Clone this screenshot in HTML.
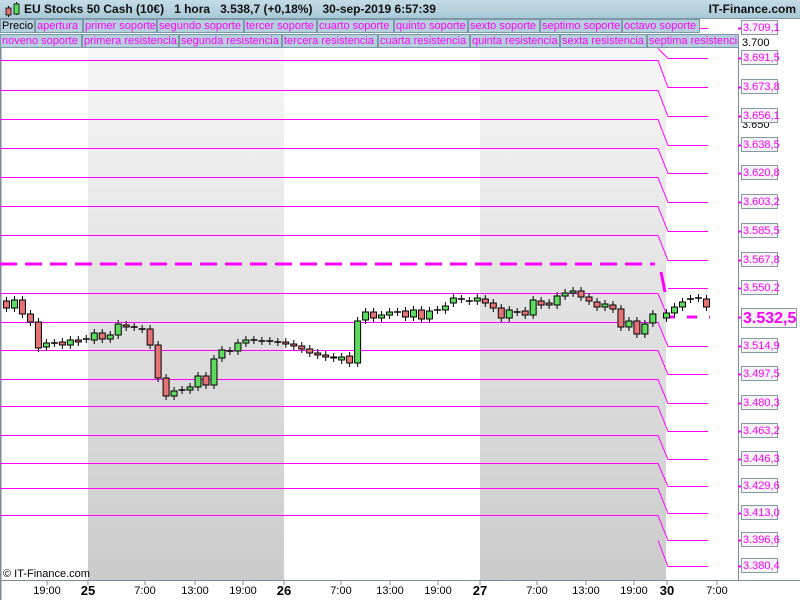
<!DOCTYPE html>
<html><head><meta charset="utf-8"><style>
body{margin:0;width:800px;height:600px;overflow:hidden;background:#fff;font-family:"Liberation Sans",sans-serif;position:relative}
.hdr{position:absolute;left:0;top:0;width:800px;height:18px;background:linear-gradient(#c4dce6,#a8c8d6);border-bottom:1px solid #7a98a8}
.hdr .t{position:absolute;left:24px;top:2px;font-size:12px;font-weight:bold;color:#111;white-space:pre}
.hdr .r{position:absolute;right:4px;top:2px;font-size:12px;font-weight:bold;color:#111}
.row{position:absolute;left:0;height:15px}
.c{position:absolute;top:0;height:14px;background:#b5d0dc;border:1px solid #7a98a8;box-sizing:border-box;color:#f0f;font-size:11px;line-height:13px;padding-left:1px;white-space:nowrap;overflow:hidden}
.lab{position:absolute;left:741px;width:37px;height:15px;border:1px solid #8899a6;background:#f4f4f4;color:#f0f;font-size:11px;line-height:15px;text-align:left;padding-left:1px;box-sizing:border-box}
.blk{position:absolute;left:742px;font-size:11px;color:#000}
.ax{position:absolute;top:585px;font-size:11px;color:#000;transform:translateX(-50%)}
.ax b{font-size:13px}
</style></head><body>
<svg style="position:absolute;left:0;top:0" width="800" height="600">
<defs><linearGradient id="g" x1="0" y1="0" x2="0" y2="1"><stop offset="0" stop-color="#f6f6f6"/><stop offset="1" stop-color="#cbcbcb"/></linearGradient></defs>
<rect x="88" y="48" width="196" height="532" fill="url(#g)"/>
<rect x="480" y="48" width="186" height="532" fill="url(#g)"/>
<line x1="0.5" y1="48" x2="0.5" y2="600" stroke="#7a8c98" stroke-width="2"/>
<line x1="738.5" y1="48" x2="738.5" y2="580" stroke="#7a8c98"/>
<line x1="0" y1="580.5" x2="800" y2="580.5" stroke="#7a8c98"/>
<g id="lines" stroke="#f0f" fill="none" stroke-width="1"></g>
<g id="ticks" stroke="#7a8c98"></g>
<line x1="0" y1="264" x2="655" y2="264" stroke="#f0f" stroke-width="3" stroke-dasharray="17,8"/>
<line x1="661" y1="272" x2="665" y2="292" stroke="#f0f" stroke-width="3"/>
<line x1="665" y1="317" x2="710" y2="317" stroke="#f0f" stroke-width="3" stroke-dasharray="10,12"/>
<g id="cd"></g>
</svg>
<div class="hdr"><svg style="position:absolute;left:3px;top:1px" width="18" height="17"><line x1="5.5" y1="5" x2="5.5" y2="16" stroke="#000"/><rect x="3" y="7" width="5" height="7" fill="#e07070" stroke="#000" stroke-width=".8"/><line x1="13.5" y1="1" x2="13.5" y2="14" stroke="#000"/><rect x="11" y="3" width="5" height="10" fill="#5d5" stroke="#000" stroke-width=".8"/></svg><div class="t">EU Stocks 50 Cash (10€)   1 hora   3.538,7 (+0,18%)   30-sep-2019 6:57:39</div><div class="r">IT-Finance.com</div></div>
<div class="row" style="top:19px">
<div class="c" style="left:0;width:35px;color:#000">Precio</div>
<div class="c" style="left:35px;width:48px">apertura</div>
<div class="c" style="left:83px;width:74px">primer soporte</div>
<div class="c" style="left:157px;width:87px">segundo soporte</div>
<div class="c" style="left:244px;width:73px">tercer soporte</div>
<div class="c" style="left:317px;width:77px">cuarto soporte</div>
<div class="c" style="left:394px;width:74px">quinto soporte</div>
<div class="c" style="left:468px;width:72px">sexto soporte</div>
<div class="c" style="left:540px;width:82px">septimo soporte</div>
<div class="c" style="left:622px;width:78px">octavo soporte</div>
</div>
<div class="row" style="top:34px">
<div class="c" style="left:0;width:82px">noveno soporte</div>
<div class="c" style="left:82px;width:97px">primera resistencia</div>
<div class="c" style="left:179px;width:103px">segunda resistencia</div>
<div class="c" style="left:282px;width:96px">tercera resistencia</div>
<div class="c" style="left:378px;width:92px">cuarta resistencia</div>
<div class="c" style="left:470px;width:90px">quinta resistencia</div>
<div class="c" style="left:560px;width:87px">sexta resistencia</div>
<div class="c" style="left:647px;width:92px">septima resistencia</div>
</div>
<div class="blk" style="top:37px">3.700</div>
<div class="blk" style="top:119px">3.650</div>
<div id="labs"></div>
<div style="position:absolute;left:741px;top:308px;width:56px;height:20px;border:1px solid #8899a6;background:#f4f4f4;color:#f0f;font-size:16px;font-weight:bold;line-height:20px;box-sizing:border-box;padding-left:1px">3.532,5</div>
<div style="position:absolute;left:3px;top:568px;font-size:11px;color:#000">© IT-Finance.com</div>
<div class="ax" style="left:47px">19:00</div><div class="ax" style="left:88px;top:583px"><b>25</b></div>
<div class="ax" style="left:145px">7:00</div><div class="ax" style="left:195px">13:00</div><div class="ax" style="left:243px">19:00</div>
<div class="ax" style="left:284px;top:583px"><b>26</b></div><div class="ax" style="left:341px">7:00</div><div class="ax" style="left:390px">13:00</div>
<div class="ax" style="left:438px">19:00</div><div class="ax" style="left:480px;top:583px"><b>27</b></div><div class="ax" style="left:537px">7:00</div>
<div class="ax" style="left:586px">13:00</div><div class="ax" style="left:634px">19:00</div><div class="ax" style="left:667px;top:583px"><b>30</b></div><div class="ax" style="left:717px">7:00</div>
<script>
var labs=[["3.709,1",28],["3.691,5",58],["3.673,8",87],["3.656,1",116],["3.638,5",145],["3.620,8",173],["3.603,2",202],["3.585,5",231],["3.567,8",260],["3.550,2",288],["3.532,5",317],["3.514,9",346],["3.497,5",374],["3.480,3",403],["3.463,2",431],["3.446,3",459],["3.429,6",486],["3.413,0",513],["3.396,6",540],["3.380,4",566]];
var plot=[null,48,60,90,119,148,177,206,235,null,293,322,350,379,406,435,463,488,515,540];
var h="",lh="";
labs.forEach(function(a,i){
 if(a[0]!="3.532,5") lh+='<div class="lab" style="top:'+(a[1]-8)+'px">'+a[0]+'</div>';
 var y=a[1]+0.5,p=plot[i];
 h+='<line x1="738" y1="'+y+'" x2="742" y2="'+y+'" stroke="#f0f" stroke-width="2"/>';
 if(i==0){h+='<polyline points="700,'+y+' 708,'+y+'"/>';return;}
 var pl=(p==48||p==540)?'':'0,'+(p+.5)+' ';
 if(p){h+='<polyline points="'+pl+'658,'+(p+.5)+' 668,'+y+(i==10?'':' 708,'+y)+'"/>';}
 else h+='<polyline points="668,'+y+' 708,'+y+'"/>';
});
document.getElementById("lines").innerHTML=h;document.getElementById("labs").innerHTML=lh;
var tk="";[47,88,145,195,243,284,341,390,438,480,537,586,634,667,717].forEach(function(x){tk+='<line x1="'+x+'" y1="580" x2="'+x+'" y2="585"/>'});
document.getElementById("ticks").innerHTML=tk;
var d=[[301,308],[308,300],[300,314],[314,322],[322,348],[347,343],[343,343],[342,345],[345,340],[340,342],[339,339],[340,333],[333,339],[339,335],[335,324],[325,327],[327,327],[329,329],[329,345],[345,378],[378,396],[396,391],[390,390],[390,387],[387,376],[376,385],[385,359],[358,350],[351,351],[351,343],[343,340],[340,340],[341,341],[341,341],[342,342],[342,344],[344,346],[346,349],[349,353],[353,355],[355,357],[357,358],[360,357],[356,363],[363,321],[320,312],[312,318],[318,315],[315,312],[312,312],[311,317],[317,310],[310,319],[319,311],[310,310],[310,306],[303,298],[299,299],[301,301],[301,298],[299,303],[303,308],[308,318],[318,310],[312,312],[311,315],[315,300],[301,305],[303,305],[305,296],[296,293],[293,291],[291,297],[297,301],[302,307],[307,304],[305,309],[309,327],[327,321],[321,334],[334,324],[323,314]];
var s="";
function cnd(x,o,c){var t=Math.min(o,c),b=Math.max(o,c);
 s+='<line x1="'+(x+.5)+'" y1="'+(t-4)+'" x2="'+(x+.5)+'" y2="'+(b+4)+'" stroke="#000"/>';
 if(b-t<1) s+='<line x1="'+(x-3)+'" y1="'+t+'" x2="'+(x+4)+'" y2="'+t+'" stroke="#000" stroke-width="1.5"/>';
 else s+='<rect x="'+(x-2.5)+'" y="'+t+'" width="6" height="'+(b-t)+'" fill="'+(c<o?"#5ddb5d":"#e57373")+'" stroke="#000" stroke-width="1"/>';}
d.forEach(function(a,i){cnd(6+i*7.98,a[0],a[1])});
[[666,318,313],[674,313,307],[682,307,302],[690,299,299],[698,298,298],[706,299,307]].forEach(function(a){cnd(a[0],a[1],a[2])});
document.getElementById("cd").innerHTML=s;
</script>
</body></html>
